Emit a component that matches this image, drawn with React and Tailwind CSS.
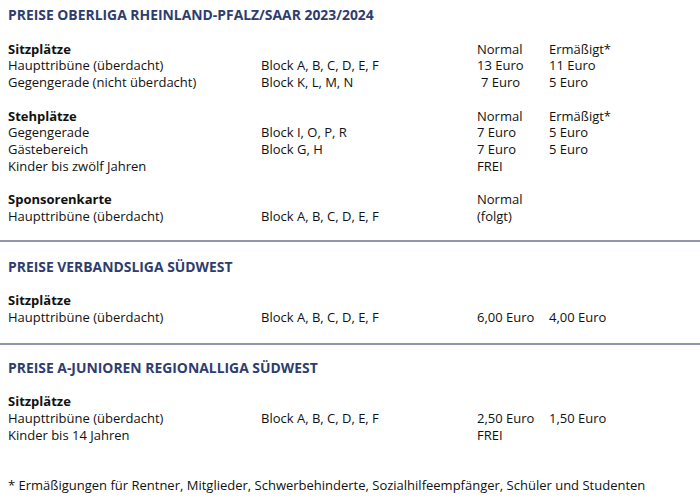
const Row = ({ a, b, c, d, bold, cPad }) => (
    <div className="grid grid-cols-[253px_216px_72px_1fr]">
        <div className={bold ? "font-bold" : ""}>{a}</div>
        <div>{b}</div>
        <div className={cPad ? "pl-[4px]" : ""}>{c}</div>
        <div>{d}</div>
    </div>
);

const Heading = ({ children }) => (
    <div className="font-bold text-[13.9px] text-[#2e3d6e] uppercase">{children}</div>
);

const Divider = () => <div className="h-[2px] bg-[#8e96b0]" />;

export default function App() {
    return (
        <div
            className="w-[700px] h-[500px] bg-white text-[#111] text-[13px] leading-[16.75px] overflow-hidden"
            style={{ fontFamily: '"Open Sans", sans-serif' }}
        >
            <div className="px-2 pt-[7px] pb-[15.4px]">
                <Heading>Preise Oberliga Rheinland-Pfalz/Saar 2023/2024</Heading>

                <div className="mt-[16.75px]">
                    <Row a="Sitzplätze" bold c="Normal" d="Ermäßigt*" />
                    <Row a="Haupttribüne (überdacht)" b="Block A, B, C, D, E, F" c="13 Euro" d="11 Euro" />
                    <Row a="Gegengerade (nicht überdacht)" b="Block K, L, M, N" c="7 Euro" cPad d="5 Euro" />
                </div>

                <div className="mt-[16.75px]">
                    <Row a="Stehplätze" bold c="Normal" d="Ermäßigt*" />
                    <Row a="Gegengerade" b="Block I, O, P, R" c="7 Euro" d="5 Euro" />
                    <Row a="Gästebereich" b="Block G, H" c="7 Euro" d="5 Euro" />
                    <Row a="Kinder bis zwölf Jahren" c="FREI" />
                </div>

                <div className="mt-[16.75px]">
                    <Row a="Sponsorenkarte" bold c="Normal" />
                    <Row a="Haupttribüne (überdacht)" b="Block A, B, C, D, E, F" c="(folgt)" />
                </div>
            </div>

            <Divider />

            <div className="px-2 pt-[16.6px] pb-[17px]">
                <Heading>Preise Verbandsliga Südwest</Heading>
                <div className="mt-[16.75px]">
                    <Row a="Sitzplätze" bold />
                    <Row a="Haupttribüne (überdacht)" b="Block A, B, C, D, E, F" c="6,00 Euro" d="4,00 Euro" />
                </div>
            </div>

            <Divider />

            <div className="px-2 pt-[15px]">
                <Heading>Preise A-Junioren Regionalliga Südwest</Heading>
                <div className="mt-[16.75px]">
                    <Row a="Sitzplätze" bold />
                    <Row a="Haupttribüne (überdacht)" b="Block A, B, C, D, E, F" c="2,50 Euro" d="1,50 Euro" />
                    <Row a="Kinder bis 14 Jahren" c="FREI" />
                </div>
                <div className="mt-[33.5px]">
                    * Ermäßigungen für Rentner, Mitglieder, Schwerbehinderte, Sozialhilfeempfänger, Schüler und Studenten
                </div>
            </div>
        </div>
    );
}
